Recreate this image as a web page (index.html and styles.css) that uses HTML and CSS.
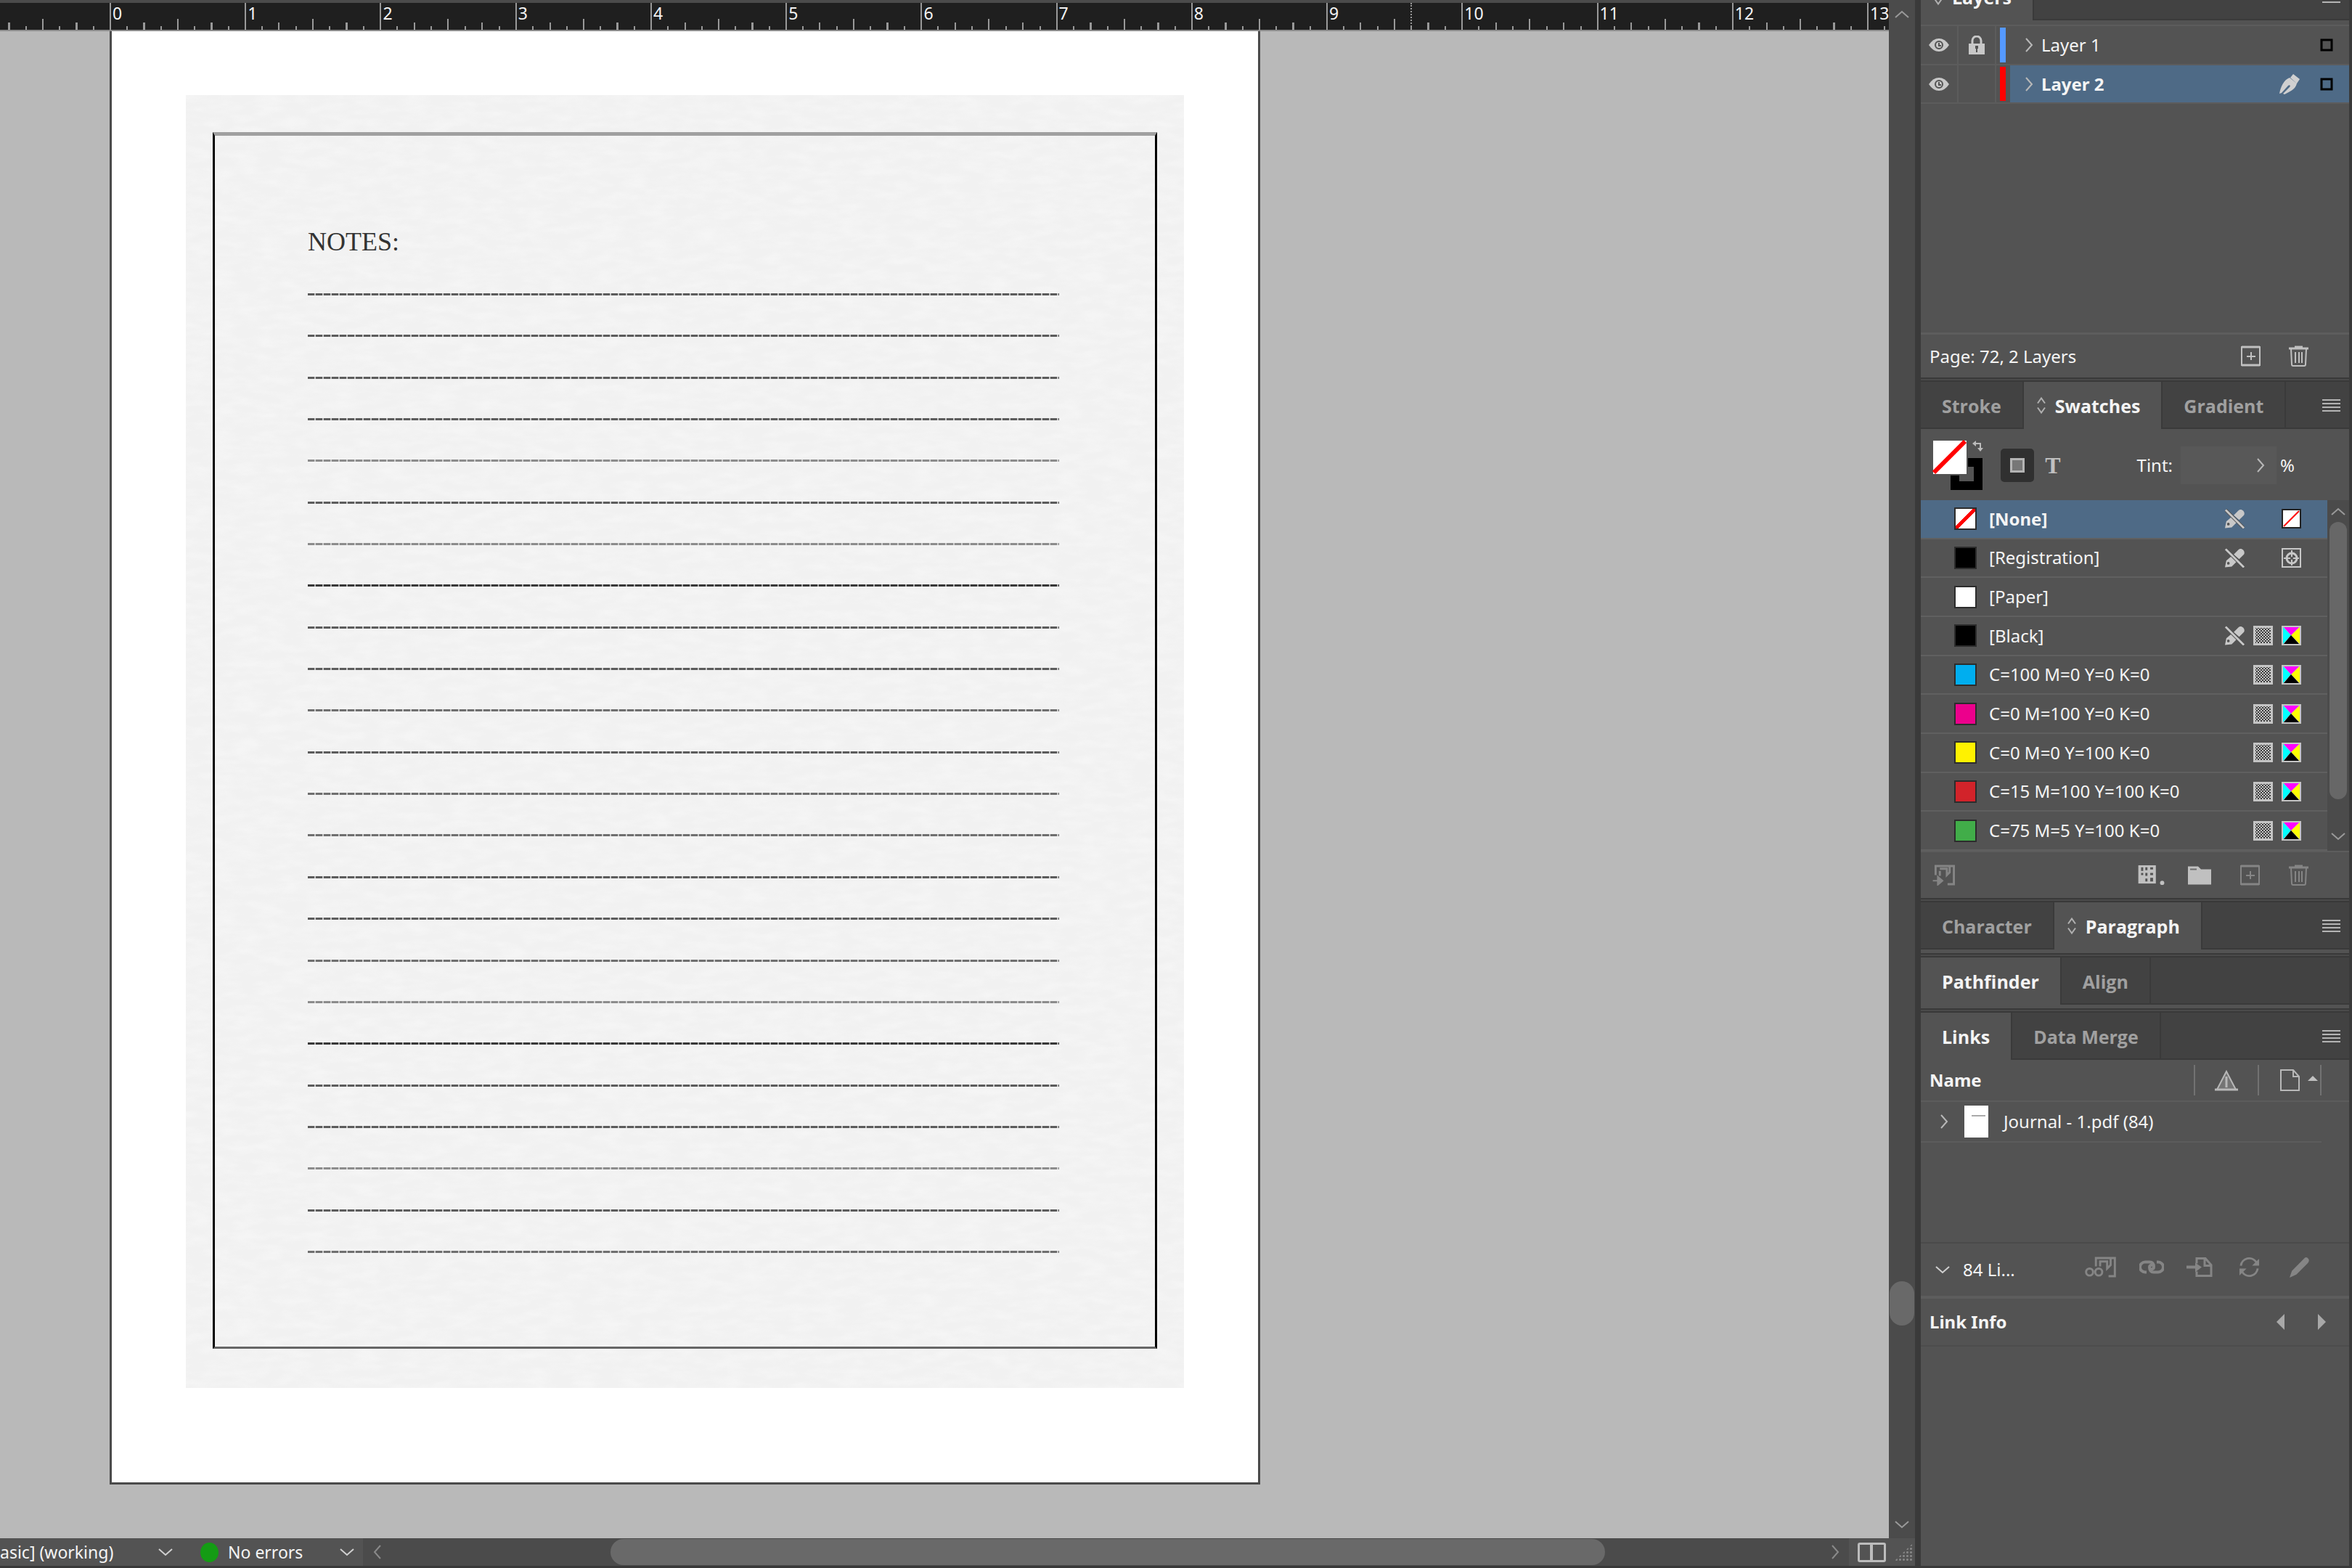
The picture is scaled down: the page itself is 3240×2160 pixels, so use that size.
FILE: index.html
```html
<!DOCTYPE html>
<html lang="en">
<head>
    <meta charset="UTF-8">
    <meta name="viewport" content="width=device-width, initial-scale=1.0">
    <title>Journal</title>
    <link rel="stylesheet" href="styles.css">
</head>
<body>
    <!-- Shared icons -->
    <svg class="defs" aria-hidden="true">
        <symbol id="i-eye" viewBox="0 0 28 20"><path d="M0 10Q6 1 14 1t14 9q-6 9-14 9T0 10z" fill="currentColor"/><circle cx="14" cy="10" r="5" fill="none" stroke="#535353" stroke-width="2"/><path d="M14 7v4h3" fill="none" stroke="#535353" stroke-width="2"/></symbol>
        <symbol id="i-lock" viewBox="0 0 22 26"><path d="M5 12V7a6 6 0 0 1 12 0v5" fill="none" stroke="currentColor" stroke-width="3"/><path d="M0 11h22v15H0z" fill="currentColor"/><path d="M9 14h4v4h-1v5h-2v-5H9z" fill="#535353"/></symbol>
        <symbol id="i-right" viewBox="0 0 12 20"><path d="M2 1l8 9-8 9" fill="none" stroke="currentColor" stroke-width="2"/></symbol>
        <symbol id="i-left" viewBox="0 0 12 20"><path d="M10 1l-8 9 8 9" fill="none" stroke="currentColor" stroke-width="2"/></symbol>
        <symbol id="i-down" viewBox="0 0 20 12"><path d="M1 2l9 8 9-8" fill="none" stroke="currentColor" stroke-width="2"/></symbol>
        <symbol id="i-up" viewBox="0 0 20 12"><path d="M1 10l9-8 9 8" fill="none" stroke="currentColor" stroke-width="2"/></symbol>
        <symbol id="i-pen" viewBox="0 0 28 28"><path d="M19 0l9 7-4 6-9-8zM14 5l10 8c-2 8-9 11-17 15l-2-1 9-9c2-2 0-4-2-2l-9 10-3 1C2 17 6 8 14 5z" fill="currentColor"/></symbol>
        <symbol id="i-target" viewBox="0 0 18 18"><path d="M2 2h14v14H2z" fill="none" stroke="#000" stroke-width="3"/></symbol>
        <symbol id="i-new" viewBox="0 0 27 29"><path d="M1 2h25v25H1z" fill="none" stroke="currentColor" stroke-width="2"/><path d="M1 2h25M1 27h25" stroke="currentColor" stroke-width="3"/><path d="M14 9v11M8 15h12" stroke="currentColor" stroke-width="2"/></symbol>
        <symbol id="i-trash" viewBox="0 0 27 29"><path d="M0 4h27M8 2h11" stroke="currentColor" stroke-width="3"/><path d="M3 4l1 22q0 2 2 2h15q2 0 2-2l1-22" fill="none" stroke="currentColor" stroke-width="2"/><path d="M9 9v15M14 9v15M18 9v15" stroke="currentColor" stroke-width="2"/></symbol>
        <symbol id="i-menu" viewBox="0 0 25 18"><path d="M0 1h25M0 6h25M0 11h25M0 16h25" stroke="currentColor" stroke-width="2"/></symbol>
        <symbol id="i-cycle" viewBox="0 0 14 24"><path d="M2 9l5-7 5 7M2 15l5 7 5-7" fill="none" stroke="currentColor" stroke-width="2"/></symbol>
        <symbol id="i-nopen" viewBox="0 0 29 28"><path d="M0 28l2-10 7-6 8 8-7 7zM13 9l7-7c4-4 11 2 8 7l-7 7z" fill="currentColor"/><path d="M1 1l27 27" stroke="#535353" stroke-width="5"/><path d="M1 1l27 27" stroke="currentColor" stroke-width="3"/><circle cx="5" cy="22" r="2" fill="#535353"/></symbol>
        <symbol id="i-none" viewBox="0 0 27 27"><path d="M1 1h25v25H1z" fill="#fff" stroke="#222" stroke-width="2"/><path d="M3 24L24 3" stroke="#f00" stroke-width="2"/></symbol>
        <symbol id="i-reg" viewBox="0 0 27 27"><path d="M1 1h25v25H1z" fill="none" stroke="currentColor" stroke-width="2"/><circle cx="14" cy="14" r="7" fill="none" stroke="currentColor" stroke-width="3"/><path d="M14 3v21M3 14h21" stroke="currentColor" stroke-width="2"/><circle cx="14" cy="14" r="2" fill="#535353"/></symbol>
        <pattern id="check" width="4" height="4" patternUnits="userSpaceOnUse"><path d="M0 0h2v2H0zM2 2h2v2H2z" fill="#3c3c3c"/></pattern>
        <symbol id="i-global" viewBox="0 0 27 27"><path d="M0 0h27v27H0z" fill="#c4c4c4"/><path d="M3 3h21v21H3z" fill="url(#check)"/></symbol>
        <symbol id="i-cmyk" viewBox="0 0 27 27"><path d="M0 0h27v27H0z" fill="#c4c4c4"/><path d="M2 2l11 11L2 25z" fill="#0ff"/><path d="M25 2L13 13l12 12z" fill="#ff0"/><path d="M3 2h21L13 13z" fill="#f0f"/><path d="M3 25h21L13 13z" fill="#000"/></symbol>
        <symbol id="i-import" viewBox="0 0 33 30"><path d="M4 15V2h26v26h-9M10 9v7M10 6h10v9l4-4V3" fill="none" stroke="currentColor" stroke-width="3"/><path d="M0 23h8M7 17l7 6-7 6z" fill="currentColor" stroke="currentColor" stroke-width="2"/></symbol>
        <symbol id="i-view" viewBox="0 0 38 30"><path d="M0 1h25v26H0z" fill="currentColor"/><path d="M4 4h3v5H4zM10 4h3v4h-3zM17 4h4v3h-4zM4 12h3v3H4zM10 12h3v4h-3zM10 20h3v4h-3zM17 12h4v3h-4zM17 19h4v5h-4z" fill="#535353"/><circle cx="34" cy="26" r="3" fill="currentColor"/></symbol>
        <symbol id="i-folder" viewBox="0 0 32 26"><path d="M0 1h14l4 4h14v21H0z" fill="currentColor"/><path d="M3 5h9" stroke="#6b6b6b" stroke-width="2"/></symbol>
        <symbol id="i-warn" viewBox="0 0 32 30"><path d="M16 3l13 25H3z" fill="#757575" stroke="currentColor" stroke-width="2"/><path d="M0 28h32" stroke="currentColor" stroke-width="3"/><path d="M16 10v15" stroke="currentColor" stroke-width="3"/></symbol>
        <symbol id="i-page" viewBox="0 0 27 30"><path d="M1 1h17l8 9v19H1z" fill="none" stroke="currentColor" stroke-width="2"/><path d="M18 1v9h8" fill="none" stroke="currentColor" stroke-width="2"/></symbol>
        <symbol id="i-relinkcc" viewBox="0 0 45 30"><path d="M16 14V2h27v26h-9M22 14V7h10v10l5-5V3" fill="none" stroke="currentColor" stroke-width="3"/><circle cx="7" cy="22" r="5" fill="none" stroke="currentColor" stroke-width="3"/><circle cx="20" cy="22" r="5" fill="none" stroke="currentColor" stroke-width="3"/></symbol>
        <symbol id="i-relink" viewBox="0 0 34 20"><path d="M10 17H8A7 7 0 0 1 8 3h6q6 0 6 7 0 3-5 3M24 3h2a7 7 0 0 1 0 14h-6q-6 0-6-7 0-3 5-3" fill="none" stroke="currentColor" stroke-width="4"/></symbol>
        <symbol id="i-goto" viewBox="0 0 36 28"><path d="M14 9V2h12l8 9v15H14v-6M25 2v10h9" fill="none" stroke="currentColor" stroke-width="3"/><path d="M0 12h12V8l9 6-9 7v-5H0z" fill="currentColor"/></symbol>
        <symbol id="i-update" viewBox="0 0 30 30"><path d="M3 13A12 12 0 0 1 25 8M27 17A12 12 0 0 1 5 22" fill="none" stroke="currentColor" stroke-width="3"/><path d="M29 3v10H19zM1 27V17h10z" fill="currentColor"/></symbol>
        <symbol id="i-pencil" viewBox="0 0 26 28"><path d="M0 28l3-9L19 3q3-4 6 0 2 3-1 6L9 24z" fill="currentColor"/></symbol>
        <symbol id="i-swap" viewBox="0 0 15 15"><path d="M3 4h8v8" fill="none" stroke="currentColor" stroke-width="2"/><path d="M0 4l5-4v8zM7 10h8l-4 5z" fill="currentColor"/></symbol>
    </svg>

    <main class="document">
        <div class="work">
            <div class="ruler">
                <div class="ruler-lead"><span class="inch"></span></div>
                <div class="inches">
                    <span class="inch">0</span><span class="inch">1</span><span class="inch">2</span><span class="inch">3</span><span class="inch">4</span><span class="inch">5</span><span class="inch">6</span><span class="inch">7</span><span class="inch">8</span><span class="inch">9</span><span class="inch">10</span><span class="inch">11</span><span class="inch">12</span>
                    <i class="cursor-mark"></i>
                </div>
                <div class="ruler-tail"><span class="inch">13</span></div>
            </div>
            <div class="canvas">
                <div class="paper">
                    <div class="artwork">
                        <svg class="grain" aria-hidden="true">
                            <filter id="grain"><feTurbulence type="fractalNoise" baseFrequency="0.03 0.09" numOctaves="3" seed="4"/><feColorMatrix values="0 0 0 0 1  0 0 0 0 1  0 0 0 0 1  2 0 0 0 -0.7"/></filter>
                            <rect width="100%" height="100%" filter="url(#grain)"/>
                        </svg>
                        <div class="frame">
                            <h1>NOTES:</h1>
                            <div class="lines">
                                <hr><hr><hr><hr><hr class="faint"><hr><hr class="faint"><hr class="dark">
                                <hr><hr><hr class="mid"><hr><hr class="mid"><hr class="mid"><hr><hr>
                                <hr class="mid"><hr class="faint"><hr class="dark"><hr><hr><hr class="faint"><hr><hr class="mid">
                            </div>
                        </div>
                    </div>
                </div>
            </div>
        </div>
        <div class="vscroll">
            <svg class="arrow"><use href="#i-up"/></svg>
            <div class="vthumb"></div>
            <svg class="arrow"><use href="#i-down"/></svg>
        </div>
        <div class="status">
            <select class="profile" aria-label="Preflight profile"><option>asic] (working)</option></select>
            <svg class="arrow light"><use href="#i-down"/></svg>
            <span class="ok-dot"></span>
            <button class="errors">No errors</button>
            <svg class="arrow light"><use href="#i-down"/></svg>
            <div class="hscroll">
                <svg class="chev"><use href="#i-left"/></svg>
                <div class="htrack"><div class="hthumb"></div></div>
                <svg class="chev"><use href="#i-right"/></svg>
            </div>
            <button class="split" aria-label="Split view"></button>
            <div class="grip"></div>
        </div>
    </main>

    <aside class="dock">
        <section class="group layers">
            <div class="tabs">
                <button class="tab active"><svg class="cycle"><use href="#i-cycle"/></svg>Layers</button>
                <button class="menu" aria-label="Panel menu"><svg><use href="#i-menu"/></svg></button>
            </div>
            <ul class="layer-list">
                <li>
                    <span class="cell eye"><svg><use href="#i-eye"/></svg></span>
                    <span class="cell lock"><svg><use href="#i-lock"/></svg></span>
                    <span class="bar blue"></span>
                    <div class="layer"><svg class="chev"><use href="#i-right"/></svg><span class="name">Layer 1</span><svg class="target"><use href="#i-target"/></svg></div>
                </li>
                <li>
                    <span class="cell eye"><svg><use href="#i-eye"/></svg></span>
                    <span class="cell lock"></span>
                    <span class="bar red"></span>
                    <div class="layer selected"><svg class="chev"><use href="#i-right"/></svg><span class="name">Layer 2</span><svg class="pen"><use href="#i-pen"/></svg><svg class="target"><use href="#i-target"/></svg></div>
                </li>
            </ul>
            <div class="layer-foot">
                <span class="name">Page: 72, 2 Layers</span>
                <button class="tool" aria-label="New layer"><svg><use href="#i-new"/></svg></button>
                <button class="tool" aria-label="Delete layer"><svg><use href="#i-trash"/></svg></button>
            </div>
        </section>

        <section class="group">
            <div class="tabs">
                <button class="tab">Stroke</button>
                <button class="tab active"><svg class="cycle"><use href="#i-cycle"/></svg>Swatches</button>
                <button class="tab">Gradient</button>
                <button class="menu" aria-label="Panel menu"><svg><use href="#i-menu"/></svg></button>
            </div>
            <div class="swatch-tools">
                <svg class="fill-stroke" viewBox="0 0 70 70">
                    <path d="M31 31h32v32H31z" fill="none" stroke="#000" stroke-width="12"/>
                    <path d="M0 0h48v48H0z" fill="#fff" stroke="#535353" stroke-width="2"/>
                    <path d="M2 45L45 2" stroke="#f00" stroke-width="6"/>
                    <svg x="55" y="1" width="15" height="15"><use href="#i-swap"/></svg>
                </svg>
                <button class="container" aria-label="Formatting affects container"></button>
                <button class="text-mode" aria-label="Formatting affects text">T</button>
                <label for="tint">Tint:</label>
                <span class="tint-box"><input type="text" id="tint"><svg class="chev"><use href="#i-right"/></svg></span>
                <span>%</span>
            </div>
            <div class="swatch-area">
                <ul class="swatches">
                    <li class="selected"><span class="chip none"></span><span class="name">[None]</span><svg><use href="#i-nopen"/></svg><svg class="blank"></svg><svg><use href="#i-none"/></svg></li>
                    <li><span class="chip black"></span><span class="name">[Registration]</span><svg><use href="#i-nopen"/></svg><svg class="blank"></svg><svg><use href="#i-reg"/></svg></li>
                    <li><span class="chip white"></span><span class="name">[Paper]</span></li>
                    <li><span class="chip black"></span><span class="name">[Black]</span><svg><use href="#i-nopen"/></svg><svg><use href="#i-global"/></svg><svg><use href="#i-cmyk"/></svg></li>
                    <li><span class="chip cyan"></span><span class="name">C=100 M=0 Y=0 K=0</span><svg><use href="#i-global"/></svg><svg><use href="#i-cmyk"/></svg></li>
                    <li><span class="chip magenta"></span><span class="name">C=0 M=100 Y=0 K=0</span><svg><use href="#i-global"/></svg><svg><use href="#i-cmyk"/></svg></li>
                    <li><span class="chip yellow"></span><span class="name">C=0 M=0 Y=100 K=0</span><svg><use href="#i-global"/></svg><svg><use href="#i-cmyk"/></svg></li>
                    <li><span class="chip crimson"></span><span class="name">C=15 M=100 Y=100 K=0</span><svg><use href="#i-global"/></svg><svg><use href="#i-cmyk"/></svg></li>
                    <li><span class="chip green"></span><span class="name">C=75 M=5 Y=100 K=0</span><svg><use href="#i-global"/></svg><svg><use href="#i-cmyk"/></svg></li>
                </ul>
                <div class="swatch-scroll">
                    <svg class="arrow"><use href="#i-up"/></svg>
                    <div class="swatch-thumb"></div>
                    <svg class="arrow"><use href="#i-down"/></svg>
                </div>
            </div>
            <div class="swatch-foot">
                <button class="tool dim import" aria-label="Add to library"><svg><use href="#i-import"/></svg></button>
                <button class="tool view" aria-label="Swatch views"><svg><use href="#i-view"/></svg></button>
                <button class="tool folder" aria-label="New color group"><svg><use href="#i-folder"/></svg></button>
                <button class="tool dim" aria-label="New swatch"><svg><use href="#i-new"/></svg></button>
                <button class="tool dim" aria-label="Delete swatch"><svg><use href="#i-trash"/></svg></button>
            </div>
        </section>

        <section class="group folded">
            <div class="tabs">
                <button class="tab">Character</button>
                <button class="tab active"><svg class="cycle"><use href="#i-cycle"/></svg>Paragraph</button>
                <button class="menu" aria-label="Panel menu"><svg><use href="#i-menu"/></svg></button>
            </div>
        </section>

        <section class="group folded">
            <div class="tabs">
                <button class="tab active">Pathfinder</button>
                <button class="tab">Align</button>
            </div>
        </section>

        <section class="group links">
            <div class="tabs">
                <button class="tab active">Links</button>
                <button class="tab">Data Merge</button>
                <button class="menu" aria-label="Panel menu"><svg><use href="#i-menu"/></svg></button>
            </div>
            <table class="link-table">
                <thead>
                    <tr>
                        <th class="col-name">Name</th>
                        <th class="col-icon"><span><svg class="warn"><use href="#i-warn"/></svg></span></th>
                        <th class="col-icon"><span class="last"><svg class="page"><use href="#i-page"/></svg><i class="sort"></i></span></th>
                        <th></th>
                    </tr>
                </thead>
                <tbody>
                    <tr>
                        <td colspan="4"><div class="link"><svg class="chev"><use href="#i-right"/></svg><span class="thumb"></span>Journal - 1.pdf (84)</div></td>
                    </tr>
                </tbody>
            </table>
            <div class="link-space"></div>
            <div class="link-tools">
                <svg class="arrow light"><use href="#i-down"/></svg>
                <span class="name">84 Li...</span>
                <button class="tool dim cc" aria-label="Relink from library"><svg><use href="#i-relinkcc"/></svg></button>
                <button class="tool dim relink" aria-label="Relink"><svg><use href="#i-relink"/></svg></button>
                <button class="tool dim goto" aria-label="Go to link"><svg><use href="#i-goto"/></svg></button>
                <button class="tool dim update" aria-label="Update link"><svg><use href="#i-update"/></svg></button>
                <button class="tool dim pencil" aria-label="Edit original"><svg><use href="#i-pencil"/></svg></button>
            </div>
            <div class="link-info">
                <h2>Link Info</h2>
                <button class="step prev" aria-label="Previous link"></button>
                <button class="step next" aria-label="Next link"></button>
            </div>
        </section>
    </aside>
</body>
</html>
```
FILE: styles.css
```css
* {
    box-sizing: border-box;
}
body {
    margin: 0;
    height: 100vh;
    overflow: hidden;
    display: flex;
    background-color: #535353;
    color: #f4f4f4;
    font-family: "Noto Sans", sans-serif;
    font-size: 24px;
    line-height: 30px;
    border-bottom: 3px solid #393939;
}
button, input, select {
    margin: 0;
    padding: 0;
    border: none;
    background: none;
    color: inherit;
    font: inherit;
    appearance: none;
}
svg {
    display: block;
    flex: none;
}
ul {
    margin: 0;
    padding: 0;
    list-style: none;
}
.defs {
    position: absolute;
    width: 0;
    height: 0;
}
.arrow {
    width: 20px;
    height: 12px;
    color: #9a9a9a;
}
.light {
    color: #d0d0d0;
}
.chev {
    width: 12px;
    height: 20px;
    color: #b8b8b8;
}

/* Document window */
.document {
    flex: 1;
    min-width: 0;
    display: grid;
    grid-template-columns: 1fr 36px;
    grid-template-rows: 1fr 38px;
    border-top: 4px solid #4b4b4b;
}
.work {
    display: flex;
    flex-direction: column;
    min-width: 0;
}
.ruler {
    height: 39px;
    display: flex;
    background-color: #1f1f1f;
    border-bottom: 2px solid #8c8c8c;
    font-size: 23px;
    line-height: 28px;
}
.ruler-lead {
    width: 151px;
    overflow: hidden;
    display: flex;
    justify-content: flex-end;
}
.ruler-tail {
    width: 30px;
    overflow: hidden;
    display: flex;
}
.ruler-lead .inch, .ruler-tail .inch {
    width: 186px;
    flex: none;
}
.inches {
    flex: 1;
    display: grid;
    grid-template-columns: repeat(13, 1fr);
    position: relative;
}
/* Full, half, quarter and eighth marks */
.inch {
    padding-left: 4px;
    background-image:
        linear-gradient(90deg, #999 2px, transparent 2px),
        repeating-linear-gradient(90deg, #999 0 2px, transparent 2px 50%),
        repeating-linear-gradient(90deg, #999 0 2px, transparent 2px 25%),
        repeating-linear-gradient(90deg, #999 0 2px, transparent 2px calc(100% / 8));
    background-size: 100% 100%, 100% 15px, 100% 10px, 100% 5px;
    background-position: left bottom;
    background-repeat: no-repeat;
}
.cursor-mark {
    position: absolute;
    left: 74%;
    top: 0;
    bottom: 0;
    border-left: 2px dotted #999;
}
.canvas {
    flex: 1;
    display: flex;
    padding: 0 866px 74px 151px;
    background-color: #b9b9b9;
}
.paper {
    flex: 1;
    display: flex;
    padding: 88px 102px 130px;
    background-color: #fff;
    border: 3px solid #4a4a4a;
    border-top: none;
}
.artwork {
    flex: 1;
    display: flex;
    position: relative;
    padding: 51px 37px 54px;
    background-color: #f1f1f1;
}
.grain {
    position: absolute;
    inset: 0;
    width: 100%;
    height: 100%;
    opacity: 0.3;
}
.frame {
    flex: 1;
    display: flex;
    flex-direction: column;
    position: relative;
    padding: 125px 132px 129px 128px;
    border: 3px solid #000;
    border-top: 5px solid #a0a0a0;
    border-bottom-color: #666;
}
.frame h1 {
    margin: 0 0 50px;
    color: #333;
    font-family: "Liberation Serif", serif;
    font-size: 36px;
    font-weight: normal;
    line-height: 42px;
}
.lines {
    flex: 1;
    display: flex;
    flex-direction: column;
    justify-content: space-between;
}
.lines hr {
    width: 100%;
    height: 3px;
    margin: 0;
    border: none;
    background-image: repeating-linear-gradient(90deg, #5c5c5c 0 9px, #c4c4c4 9px 11px);
}
.lines .mid {
    background-image: repeating-linear-gradient(90deg, #6f6f6f 0 9px, #c8c8c8 9px 11px);
}
.lines .faint {
    background-image: repeating-linear-gradient(90deg, #8c8c8c 0 9px, #ccc 9px 11px);
}
.lines .dark {
    background-image: repeating-linear-gradient(90deg, #383838 0 9px, #aaa 9px 11px);
}
.vscroll {
    display: flex;
    flex-direction: column;
    align-items: center;
    padding: 10px 0 13px;
    background-color: #4b4b4b;
}
.vthumb {
    width: 34px;
    height: 61px;
    margin: auto 0 268px;
    border-radius: 17px;
    background-color: #696969;
}
.status {
    grid-column: 1 / 3;
    display: flex;
    align-items: center;
    background-color: #535353;
    font-size: 23px;
}
.profile {
    width: 218px;
}
.ok-dot {
    width: 25px;
    height: 27px;
    margin: 0 13px 0 38px;
    border-radius: 50%;
    background-color: #149c14;
}
.errors {
    width: 154px;
    text-align: left;
}
.hscroll {
    flex: 1;
    align-self: stretch;
    display: flex;
    align-items: center;
    margin-left: 12px;
    padding: 0 13px 0 14px;
    background-color: #4b4b4b;
}
.hscroll .chev {
    color: #8a8a8a;
}
.htrack {
    flex: 1;
    padding: 0 311px 0 315px;
}
.hthumb {
    height: 36px;
    border-radius: 18px;
    background-color: #696969;
}
.split {
    width: 39px;
    height: 27px;
    margin: 0 12px;
    border: 3px solid #bcbcbc;
    border-radius: 3px;
    background: linear-gradient(90deg, transparent 14px, #bcbcbc 14px 18px, transparent 18px);
}
.grip {
    width: 25px;
    height: 24px;
    margin-right: 3px;
    background-image: radial-gradient(#858585 1px, transparent 2px);
    background-size: 5px 5px;
    clip-path: polygon(100% 0, 100% 100%, 0 100%);
}

/* Panel dock */
.dock {
    flex: 0 0 602px;
    display: flex;
    flex-direction: column;
    background-color: #4a4a4a;
    border: solid #3a3a3a;
    border-width: 0 4px 0 8px;
    overflow: hidden;
}
.group {
    margin-bottom: 2px;
    background-color: #535353;
    border: solid #393939;
    border-width: 2px 0;
}
.layers {
    margin-top: -39px;
}
.folded {
    padding-bottom: 5px;
}
.tabs {
    display: flex;
    height: 65px;
    background-color: #424242;
    box-shadow: inset 0 -2px #3a3a3a;
}
.tab {
    display: flex;
    align-items: center;
    padding: 0 29px;
    color: #a0a0a0;
    font-family: "Open Sans", sans-serif;
    font-size: 25px;
    font-weight: 700;
    border-right: 2px solid #3a3a3a;
}
.tab.active {
    color: #f4f4f4;
    background-color: #535353;
}
.cycle {
    width: 14px;
    height: 27px;
    margin: 0 12px 0 -12px;
    color: #b0b0b0;
}
.menu {
    margin-left: auto;
    padding-right: 12px;
    color: #b4b4b4;
}
.menu svg {
    width: 25px;
    height: 18px;
}
.name {
    flex: 1;
    text-align: left;
}
.tool {
    color: #c0c0c0;
}
.tool svg {
    width: 27px;
    height: 29px;
}
.dim {
    color: #858585;
}

/* Layers */
.layer-list {
    height: 433px;
    padding-top: 6px;
    border-bottom: 3px solid #5d5d5d;
}
.layer-list li {
    display: flex;
    height: 54px;
    border-top: 2px solid #5c5c5c;
}
.layer-list li:last-child {
    height: 55px;
    border-bottom: 2px solid #5c5c5c;
}
.cell {
    display: flex;
    align-items: center;
    justify-content: center;
    width: 52px;
    border-right: 2px solid #5c5c5c;
    color: #c8c8c8;
}
.eye svg {
    width: 28px;
    height: 20px;
}
.lock svg {
    width: 22px;
    height: 26px;
}
.bar {
    width: 8px;
    margin: 2px 6px 2px 5px;
}
.blue {
    background-color: #5599ff;
}
.red {
    background-color: #ff0000;
}
.layer {
    flex: 1;
    display: flex;
    align-items: center;
    gap: 11px;
    padding: 0 22px 0 20px;
}
.pen {
    width: 28px;
    height: 28px;
    margin-right: 17px;
    color: #d0d0d0;
}
.target {
    width: 18px;
    height: 18px;
}
.selected {
    background-color: #4e6a86;
    font-weight: bold;
}
.layer-foot {
    display: flex;
    align-items: center;
    gap: 39px;
    height: 59px;
    padding: 0 56px 0 12px;
}

/* Swatches */
.swatch-tools {
    display: flex;
    align-items: center;
    height: 98px;
    padding: 2px 12px 0 16px;
}
.fill-stroke {
    width: 70px;
    height: 70px;
    margin-right: 24px;
    color: #bbb;
}
.container {
    width: 46px;
    height: 46px;
    border: 13px solid #303030;
    border-radius: 5px;
    background-color: #777;
    outline: 3px solid #b4b4b4;
    outline-offset: -16px;
}
.text-mode {
    width: 52px;
    color: #c0c0c0;
    font-family: "Liberation Serif", serif;
    font-size: 32px;
    font-weight: bold;
}
.swatch-tools label {
    margin-left: auto;
}
.tint-box {
    display: flex;
    align-items: center;
    width: 132px;
    height: 52px;
    margin: 0 5px 0 11px;
    padding-right: 16px;
    background-color: #585858;
}
.tint-box input {
    flex: 1;
    min-width: 0;
}
.swatch-tools > span:last-child {
    width: 83px;
}
.swatch-area {
    display: flex;
    height: 485px;
    border-bottom: 2px solid #5d5d5d;
}
.swatches {
    flex: 1;
    display: grid;
    grid-template-rows: repeat(9, 1fr);
}
.swatches li {
    display: flex;
    align-items: center;
    gap: 12px;
    padding: 0 36px 0 46px;
    border-bottom: 2px solid #606060;
}
.swatches svg {
    width: 27px;
    height: 27px;
    color: #c8c8c8;
}
.chip {
    width: 31px;
    height: 31px;
    margin-right: 5px;
    border: 2px solid #2c2c2c;
}
.none {
    background: linear-gradient(to bottom right, #fff 43%, #f00 43% 57%, #fff 57%);
}
.black { background-color: #000; }
.white { background-color: #fff; }
.cyan { background-color: #00aeef; }
.magenta { background-color: #ec008c; }
.yellow { background-color: #fff200; }
.crimson { background-color: #d2232a; }
.green { background-color: #41ad49; }
.swatch-scroll {
    display: flex;
    flex-direction: column;
    align-items: center;
    width: 30px;
    padding: 10px 0 14px;
    background-color: #4b4b4b;
}
.swatch-thumb {
    width: 24px;
    height: 382px;
    margin: 8px 0 auto;
    border-radius: 12px;
    background-color: #676767;
}
.swatch-foot {
    display: flex;
    align-items: center;
    height: 63px;
    padding: 0 56px 0 16px;
}
.swatch-foot .tool {
    margin-left: 40px;
}
.swatch-foot .import {
    margin: 0 auto 0 0;
}
.import svg {
    width: 33px;
}
.swatch-foot .folder {
    margin-left: 31px;
}
.view svg {
    width: 38px;
}
.folder svg {
    width: 32px;
}

/* Links */
.links {
    flex: 1;
    display: flex;
    flex-direction: column;
    margin-bottom: 0;
    border-bottom: none;
}
.link-table {
    width: 100%;
    border-collapse: collapse;
    table-layout: fixed;
}
.link-table th {
    height: 57px;
    padding: 0;
    border-bottom: 2px solid #5c5c5c;
    text-align: left;
}
.link-table .col-name {
    padding-left: 12px;
}
.link-table .col-icon {
    width: 88px;
}
.link-table th:last-child {
    width: 38px;
}
.col-icon span {
    display: flex;
    align-items: center;
    justify-content: center;
    height: 42px;
    color: #b8b8b8;
    border-left: 2px solid #727272;
}
.col-icon .last {
    justify-content: flex-end;
    gap: 11px;
    padding-right: 3px;
    border-right: 2px solid #727272;
}
.warn {
    width: 32px;
    height: 30px;
}
.page {
    width: 27px;
    height: 30px;
}
.sort {
    margin-bottom: 6px;
    border: 7px solid transparent;
    border-top: none;
    border-bottom-color: #c0c0c0;
}
.link-table td {
    padding: 0;
}
.link {
    display: flex;
    align-items: center;
    height: 56px;
    margin-right: 38px;
    padding-left: 26px;
    border-bottom: 2px solid #5c5c5c;
}
.thumb {
    width: 33px;
    height: 44px;
    margin: 0 21px 0 22px;
    background: linear-gradient(#aaa, #aaa) 10px 13px / 19px 2px no-repeat #fff;
}
.link-space {
    height: 139px;
    border-bottom: 2px solid #4a4a4a;
}
.link-tools {
    display: flex;
    align-items: center;
    height: 76px;
    padding: 0 55px 0 20px;
    border-bottom: 4px solid #5d5d5d;
}
.link-tools .name {
    padding-left: 18px;
}
.link-tools .tool {
    margin: 0 0 8px 35px;
}
.link-tools .relink, .link-tools .goto {
    margin-left: 31px;
}
.cc svg {
    width: 45px;
}
.relink svg {
    width: 34px;
}
.goto svg {
    width: 36px;
}
.update svg {
    width: 31px;
}
.link-tools .pencil {
    margin-left: 40px;
}
.link-info {
    display: flex;
    align-items: center;
    height: 66px;
    padding: 0 32px 0 12px;
    border-bottom: 2px solid #4d4d4d;
}
.link-info h2 {
    flex: 1;
    margin: 0;
    font-size: 24px;
}
.step {
    border: 11px solid transparent;
}
.prev {
    margin-right: 46px;
    border-left: none;
    border-right-color: #a8a8a8;
}
.next {
    border-right: none;
    border-left-color: #a8a8a8;
}
```
